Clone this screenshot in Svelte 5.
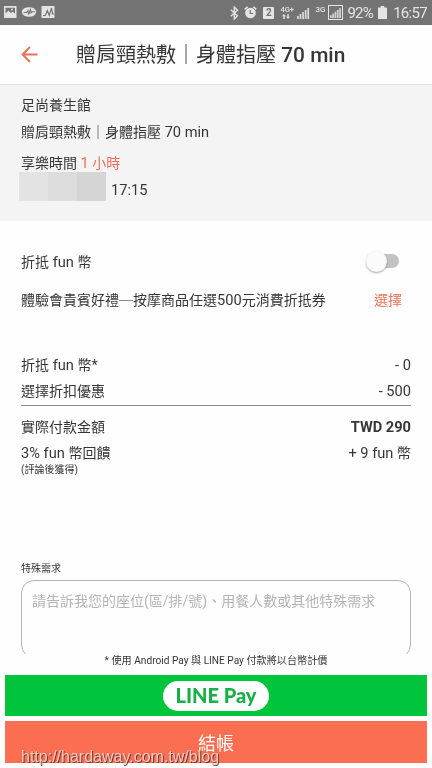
<script>
	const title = '贈肩頸熱敷｜身體指壓 70 min';
	const shop = '足尚養生館';
	const time = '17:15';

	const bars = [3, 5, 7, 9, 11];
	const mosaic = ['#e3e3e3', '#dcdcdc', '#d5d5d5'];

	const discounts = [
		{ label: '折抵 fun 幣*', value: '- 0' },
		{ label: '選擇折扣優惠', value: '- 500' }
	];

	// latin runs are set slightly larger than the chinese around them
	const split = text => text.split(/([\x20-\x7e]+)/).filter(d => d);
	const isLatin = run => /^[\x20-\x7e]/.test(run);

	let useCoins = false;
	let note = '';
</script>

{#snippet mixed(text)}{#each split(text) as run}<span class:latin={isLatin(run)}>{run}</span>{/each}{/snippet}

<div class="screen">
	<div class="status">
		<svg class="notices" width="56" height="14" viewBox="0 0 56 14">
			<path d="M1 1h12.5v12H1z" fill="#e4e4e4" />
			<path d="M2.5 2.8h9.5v5.7l-2.5-1.7-2 1.2-2-2.4-3 3z" fill="#737373" />
			<circle cx="9" cy="4.5" r="1" fill="#e4e4e4" />
			<ellipse cx="26" cy="7" rx="7.2" ry="4.8" fill="#e4e4e4" />
			<path d="M20.5 7.5h3l1.5-2 .5 4 2-5 .5 3.5 1-1.3h3" fill="none" stroke="#737373" stroke-width="1.1" />
			<path d="M38.5 1h13v12h-13z" fill="#e4e4e4" />
			<path d="M40 10.5h2.3l2-5 2 5 2.2-7.5 1.2 6h1.5" fill="none" stroke="#737373" stroke-width="1.2" />
		</svg>
		<div class="system">
			<svg class="bluetooth" width="9" height="14" viewBox="0 0 9 14">
				<path d="M.8 3.8l6.7 6L4.3 13V1l3.2 3.2-6.7 6" fill="none" stroke="#e4e4e4" stroke-width="1.4" />
			</svg>
			<svg class="alarm" width="13" height="13" viewBox="0 0 13 13">
				<circle cx="6.5" cy="7" r="5.3" fill="#e4e4e4" />
				<path d="M.7 3.4L3.7.9M9.3.9l3 2.5" stroke="#e4e4e4" stroke-width="1.6" />
				<path d="M6.2 4v3.5h3" fill="none" stroke="#737373" stroke-width="1.2" />
			</svg>
			<span class="sim">2</span>
			<span class="net">
				4G+
				<svg width="8" height="5" viewBox="0 0 8 5">
					<path d="M2 0l2 2.2H2.7V5H1.3V2.2H0zM6 5L4 2.8h1.3V0h1.4v2.8H8z" fill="#e4e4e4" />
				</svg>
			</span>
			<svg class="signal" width="13" height="13" viewBox="0 0 13 13">
				{#each bars as h, i}
					<rect x={i * 2.6} y={12 - h} width="1.7" height={h} fill="#dcdcdc" />
				{/each}
			</svg>
			<span class="net three">3G</span>
			<svg class="boxed" width="15" height="15" viewBox="0 0 15 15">
				<rect x=".5" y=".5" width="14" height="14" fill="none" stroke="#e4e4e4" />
				{#each bars as h, i}
					<rect x={2 + i * 2.3} y={13 - h * 0.9} width="1.7" height={h * 0.9} fill="#d4d4d4" />
				{/each}
			</svg>
			<span class="percent">92%</span>
			<svg class="battery" width="9" height="13" viewBox="0 0 9 13">
				<path d="M2.7 0h3.6v1.5H9V13H0V1.5h2.7z" fill="#e4e4e4" />
			</svg>
			<span class="clock">16:57</span>
		</div>
	</div>

	<header>
		<svg width="17" height="17" viewBox="0 0 17 17">
			<path d="M16.5 8.5H1.5M9 1L1.5 8.5 9 16" fill="none" stroke="#e8705a" stroke-width="1.9" />
		</svg>
		<h1>{@render mixed(title)}</h1>
	</header>

	<section class="order">
		<p>{shop}</p>
		<p class="item">{@render mixed(title)}</p>
		<p class="duration">享樂時間 <span class="accent">{@render mixed('1 小時')}</span></p>
		<div class="date">
			<div class="mosaic">
				{#each mosaic as color}
					<i style="background: {color}"></i>
				{/each}
			</div>
			<p>{@render mixed(time)}</p>
		</div>
	</section>

	<section class="options">
		<div class="row coins">
			<p>{@render mixed('折抵 fun 幣')}</p>
			<button class="switch" class:on={useCoins} aria-label="fun 幣" on:click={() => (useCoins = !useCoins)}>
				<span class="knob"></span>
			</button>
		</div>
		<div class="row coupon">
			<p>{@render mixed('體驗會貴賓好禮─按摩商品任選500元消費折抵券')}</p>
			<span class="accent">選擇</span>
		</div>
	</section>

	<section class="totals">
		<div class="discounts">
			{#each discounts as d}
				<div class="row"><p>{@render mixed(d.label)}</p><p>{@render mixed(d.value)}</p></div>
			{/each}
		</div>
		<div class="row"><p>實際付款金額</p><p class="total">{@render mixed('TWD 290')}</p></div>
		<div class="row reward"><p>{@render mixed('3% fun 幣回饋')}</p><p>{@render mixed('+ 9 fun 幣')}</p></div>
		<p class="small">(評論後獲得)</p>
	</section>

	<section class="request">
		<p class="small">特殊需求</p>
		<div class="clip">
			<textarea bind:value={note} placeholder="請告訴我您的座位(區/排/號)、用餐人數或其他特殊需求"></textarea>
		</div>
	</section>

	<footer>
		<p class="small">* 使用 Android Pay 與 LINE Pay 付款將以台幣計價</p>
		<button class="line"><span>LINE Pay</span></button>
		<button class="checkout">結帳</button>
	</footer>

	<div class="watermark">http://hardaway.com.tw/blog</div>
</div>

<style>
	:global(body) {
		background: #fefefe;
	}
	.screen {
		position: relative;
		display: flex;
		flex-direction: column;
		width: 432px;
		height: 768px;
		overflow: hidden;
		will-change: transform;
		color: #363636;
		font: 14px/20px Roboto, "Noto Sans CJK TC", sans-serif;
	}
	p, h1 {
		margin: 0;
		white-space: pre;
	}
	button {
		border: 0;
		padding: 0;
		font-family: inherit;
	}
	svg {
		display: block;
		flex: none;
	}
	.latin {
		font-size: 1.045em;
		line-height: 1;
	}
	.accent {
		color: #ee7059;
	}
	.small {
		font-size: 10px;
		line-height: 14px;
	}
	.row {
		display: flex;
		justify-content: space-between;
		height: 20px;
	}

	.status {
		display: flex;
		justify-content: space-between;
		height: 25px;
		padding: 0 5px 0 3px;
		background: #737373;
		color: #e4e4e4;
		box-sizing: border-box;
	}
	.notices {
		margin-top: 5px;
	}
	.system {
		display: flex;
		align-items: center;
	}
	.alarm {
		margin-left: 5px;
	}
	.sim {
		width: 11px;
		height: 12px;
		margin-left: 6px;
		border-radius: 1px;
		background: #e4e4e4;
		color: #737373;
		font: bold 10px/12px Roboto, sans-serif;
		text-align: center;
	}
	.net {
		width: 14px;
		height: 15px;
		margin-left: 6px;
		font: 500 7.5px/9px Roboto, sans-serif;
	}
	.net svg {
		margin: 0 0 0 2px;
	}
	.signal {
		margin: 2px 0 0 3px;
	}
	.three {
		width: 10px;
		margin-left: 5px;
		font-size: 8px;
	}
	.boxed {
		margin-left: 3px;
	}
	.percent, .clock {
		margin-top: 1px;
		font-size: 15px;
		line-height: 24px;
		letter-spacing: -.7px;
	}
	.percent {
		margin-left: 4px;
	}
	.battery {
		margin-left: 5px;
	}
	.clock {
		margin-left: 6px;
	}

	header {
		display: flex;
		align-items: center;
		height: 60px;
		padding-left: 21px;
		border-bottom: 1px solid #e2e2e2;
		box-sizing: border-box;
	}
	h1 {
		margin-left: 38px;
		padding-top: 1px;
		font-size: 20px;
		line-height: 28px;
		font-weight: 400;
	}
	h1 .latin {
		font-weight: 500;
	}

	.order {
		height: 136px;
		padding: 10px 21px 0;
		background: #f4f4f4;
		box-sizing: border-box;
	}
	.item {
		margin-top: 7px;
	}
	.duration {
		margin-top: 11px;
	}
	.date {
		display: flex;
		align-items: center;
		gap: 5px;
		height: 29px;
		margin: -1px 0 0 -2px;
	}
	.date p {
		padding-top: 7px;
	}
	.mosaic {
		display: flex;
	}
	.mosaic i {
		width: 29px;
		height: 29px;
	}

	.options {
		padding: 31px 21px 0;
	}
	.coins {
		padding-right: 12px;
	}
	.switch {
		position: relative;
		width: 28px;
		height: 14px;
		margin-top: 2px;
		border-radius: 7px;
		background: #c2c2c2;
	}
	.knob {
		position: absolute;
		top: -3px;
		left: -5px;
		width: 21px;
		height: 21px;
		border-radius: 50%;
		background: #fafafa;
		box-shadow: 0 1px 2px rgba(0, 0, 0, .35);
	}
	.on .knob {
		left: 12px;
	}
	.coupon {
		margin-top: 18px;
		padding-right: 9px;
	}

	.totals {
		height: 206px;
		padding: 45px 21px 0;
		box-sizing: border-box;
	}
	.discounts {
		display: grid;
		gap: 6px;
		padding-bottom: 4px;
		margin-bottom: 11px;
		border-bottom: 1px solid #8c8c8c;
	}
	.total {
		font-weight: 700;
	}
	.reward {
		margin-top: 6px;
	}

	.request {
		margin-top: 46px;
		padding: 0 21px;
	}
	.clip {
		height: 74px;
		margin-top: 4px;
		overflow: hidden;
	}
	textarea {
		display: block;
		width: 100%;
		height: 78px;
		padding: 10px;
		border: 1px solid #b4b4b4;
		border-radius: 13px;
		background: none;
		box-sizing: border-box;
		font: inherit;
		resize: none;
		overflow: hidden;
	}
	textarea::placeholder {
		color: #b4b4b4;
	}

	footer {
		display: flex;
		flex-direction: column;
		padding: 0 5px;
		text-align: center;
	}
	footer .small {
		font-size: 10.15px;
	}
	.line {
		display: flex;
		align-items: center;
		justify-content: center;
		height: 41px;
		margin-top: 7px;
		background: #00c43c;
	}
	.line span {
		width: 106px;
		height: 30px;
		border-radius: 15px;
		background: #fff;
		color: #16b045;
		font: 900 20px/29px Lato, sans-serif;
	}
	.checkout {
		height: 42px;
		margin-top: 5px;
		background: #fb6e52;
		color: #fff;
		font-size: 18px;
	}
	.watermark {
		position: absolute;
		left: 21px;
		bottom: 0;
		color: #f3c9bf;
		font: 16px/22px "Liberation Sans", sans-serif;
		text-shadow: 1px 1px 0 rgba(70, 40, 35, .75);
	}
</style>
